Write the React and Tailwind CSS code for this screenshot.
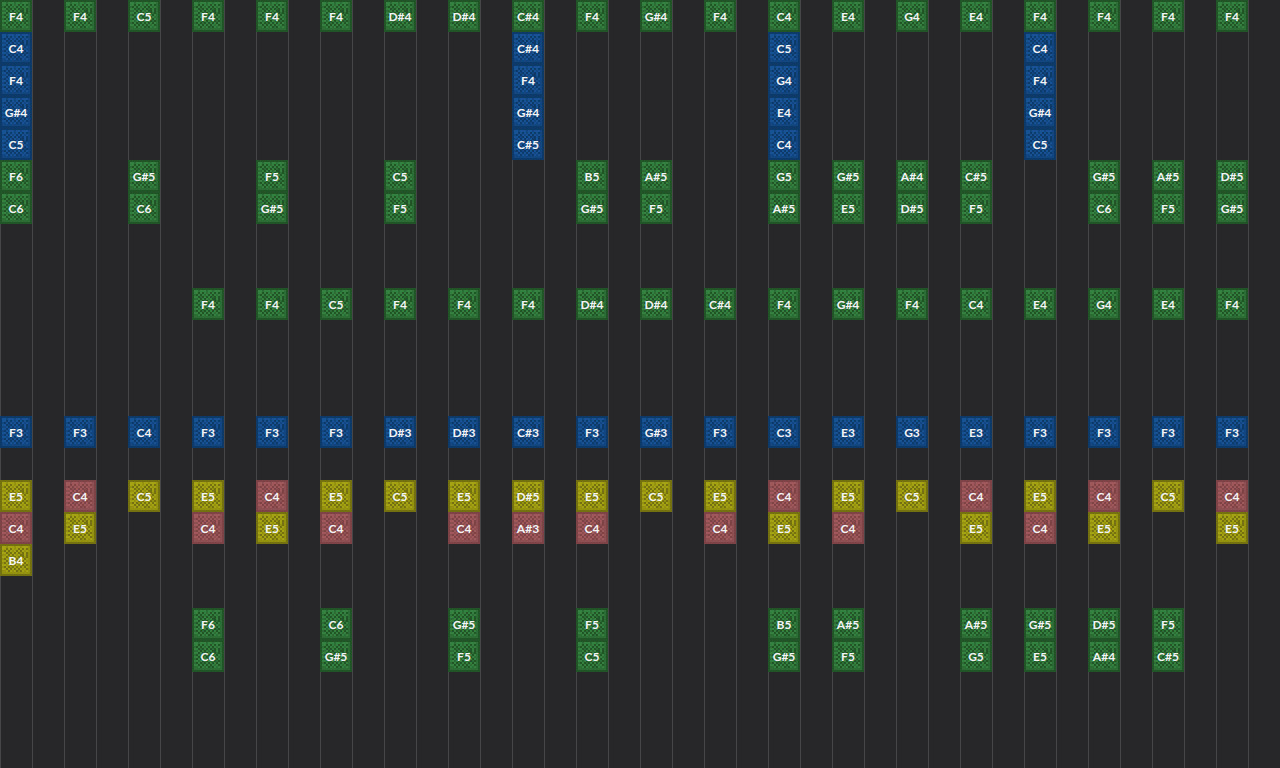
const lanes = [
  ['green', 'F4 F4 C5 F4 F4 F4 D#4 D#4 C#4 F4 G#4 F4 C4 E4 G4 E4 F4 F4 F4 F4'],
  ['blue', 'C4 - - - - - - - C#4 - - - C5 - - - C4 - - -'],
  ['blue', 'F4 - - - - - - - F4 - - - G4 - - - F4 - - -'],
  ['blue', 'G#4 - - - - - - - G#4 - - - E4 - - - G#4 - - -'],
  ['blue', 'C5 - - - - - - - C#5 - - - C4 - - - C5 - - -'],
  ['green', 'F6 - G#5 - F5 - C5 - - B5 A#5 - G5 G#5 A#4 C#5 - G#5 A#5 D#5'],
  ['green', 'C6 - C6 - G#5 - F5 - - G#5 F5 - A#5 E5 D#5 F5 - C6 F5 G#5'],
  ['green', ''],
  ['green', ''],
  ['green', '- - - F4 F4 C5 F4 F4 F4 D#4 D#4 C#4 F4 G#4 F4 C4 E4 G4 E4 F4'],
  ['green', ''],
  ['green', ''],
  ['green', ''],
  ['blue', 'F3 F3 C4 F3 F3 F3 D#3 D#3 C#3 F3 G#3 F3 C3 E3 G3 E3 F3 F3 F3 F3'],
  ['blue', ''],
  ['yellow', 'E5 C4* C5 E5 C4* E5 C5 E5 D#5 E5 C5 E5 C4* E5 C5 C4* E5 C4* C5 C4*'],
  ['yellow', 'C4* E5 - C4* E5 C4* - C4* A#3* C4* - C4* E5 C4* - E5 C4* E5 - E5'],
  ['yellow', 'B4'],
  ['green', ''],
  ['green', '- - - F6 - C6 - G#5 - F5 - - B5 A#5 - A#5 G#5 D#5 F5 -'],
  ['green', '- - - C6 - G#5 - F5 - C5 - - G#5 F5 - G5 E5 A#4 C#5 -'],
  ['green', ''],
  ['green', ''],
  ['green', ''],
];

// dark, light, mid
const palette = {
  green: ['#215527', '#34803e', '#2b6d34'],
  blue: ['#0e3a6a', '#175294', '#124680'],
  yellow: ['#747210', '#a5a214', '#94920f'],
  red: ['#7d4346', '#a0585b', '#8e4f52'],
};

const texture = [
  'dddddddddddddddd',
  'dllmlllmllmlllmd',
  'dlldldlmldldldmd',
  'dmdldlmldldlmlmd',
  'dlldmdldldmdldmd',
  'dmmldldlmlddldmd',
  'dlldldmdldldmdmd',
  'dmdlmldldlmldlmd',
  'dlldldldmdldlmmd',
  'dmdldlmldldldlmd',
  'dllmldldlmldmdmd',
  'dmdldmdldldldlmd',
  'dlldldldldlmldmd',
  'dmmldlmldmdlmlmd',
  'dmmmmmmmmmmmmmmd',
  'dddddddddddddddd',
];

function Texture({ id, colors }) {
  const [dark, light, mid] = colors;
  return (
    <symbol id={id} viewBox="0 0 16 16">
      <rect width="16" height="16" fill={dark} />
      {texture.map((row, y) =>
        row.split('').map((c, x) =>
          c === 'd' ? null : (
            <rect key={`${x}-${y}`} x={x} y={y} width="1" height="1" fill={c === 'l' ? light : mid} />
          )
        )
      )}
    </symbol>
  );
}

function NoteBlock({ note, color }) {
  return (
    <button type="button" className="grid h-8 w-8 shrink-0 place-items-center">
      <svg className="col-start-1 row-start-1 h-8 w-8" shapeRendering="crispEdges" aria-hidden="true">
        <use href={`#block-${color}`} width="32" height="32" />
      </svg>
      <span className="z-10 col-start-1 row-start-1 pt-px text-[12px] leading-4 font-bold text-gray-100">{note}</span>
    </button>
  );
}

export default function App() {
  return (
    <main className="min-h-screen overflow-hidden bg-[#272729] bg-[repeating-linear-gradient(to_right,#464648_0_1px,transparent_1px_32px)] font-['Lato',sans-serif]">
      <svg className="hidden">
        {Object.entries(palette).map(([name, colors]) => (
          <Texture key={name} id={`block-${name}`} colors={colors} />
        ))}
      </svg>
      {lanes.map(([color, notes], lane) => (
        <div key={lane} className="flex h-8 gap-8">
          {notes.split(' ').map((note, tick) =>
            note === '-' || note === '' ? (
              <div key={tick} className="w-8 shrink-0" />
            ) : (
              <NoteBlock key={tick} note={note.replace('*', '')} color={note.endsWith('*') ? 'red' : color} />
            )
          )}
        </div>
      ))}
    </main>
  );
}
